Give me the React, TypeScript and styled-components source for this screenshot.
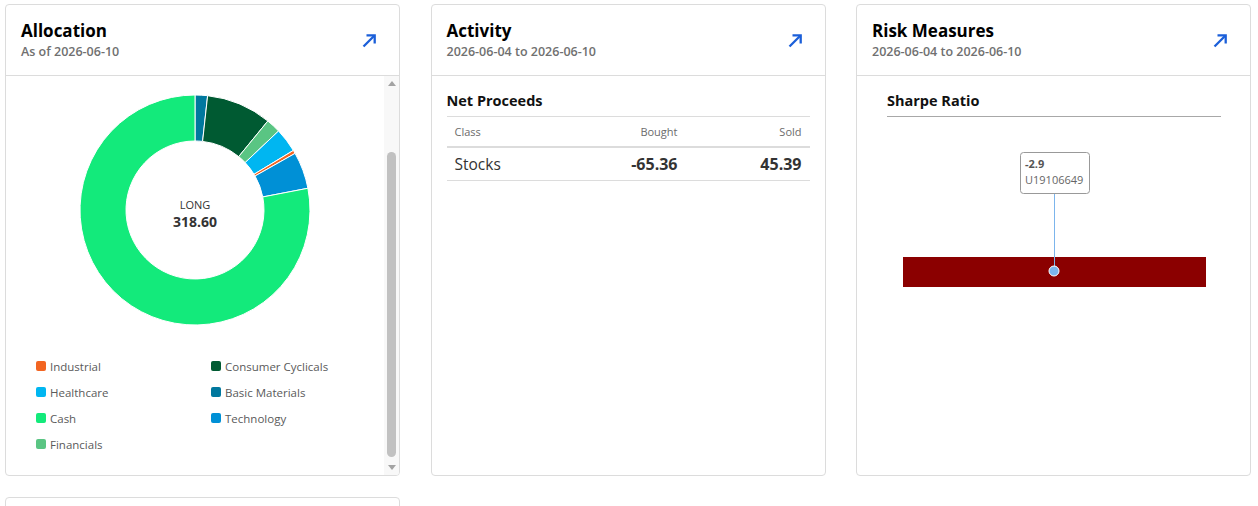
import styled, { createGlobalStyle } from "styled-components";

const GlobalStyle = createGlobalStyle`
  html, body {
    margin: 0;
    padding: 0;
    background: #fff;
    font-family: "Open Sans", "Lato", sans-serif;
    color: #222;
  }
  * { box-sizing: border-box; }
`;

type Slice = { name: string; color: string; value: number };

const slices: Slice[] = [
    { name: "Basic Materials", color: "#00789e", value: 5.58 },
    { name: "Consumer Cyclicals", color: "#005a32", value: 29.2 },
    { name: "Financials", color: "#5ac583", value: 6.46 },
    { name: "Healthcare", color: "#00b6f1", value: 10.8 },
    { name: "Industrial", color: "#f26522", value: 1.5 },
    { name: "Technology", color: "#0090d6", value: 16.46 },
    { name: "Cash", color: "#13ea7b", value: 248.6 },
];

const legendOrder = [
    "Industrial",
    "Consumer Cyclicals",
    "Healthcare",
    "Basic Materials",
    "Cash",
    "Technology",
    "Financials",
];

const CX = 189;
const CY = 120;
const R_OUT = 115;
const R_IN = 69;

const pt = (r: number, deg: number) => {
    const a = (deg * Math.PI) / 180;
    return `${(CX + r * Math.sin(a)).toFixed(2)} ${(CY - r * Math.cos(a)).toFixed(2)}`;
};

const arcPath = (a0: number, a1: number) => {
    const large = a1 - a0 > 180 ? 1 : 0;
    return [
        `M ${pt(R_OUT, a0)}`,
        `A ${R_OUT} ${R_OUT} 0 ${large} 1 ${pt(R_OUT, a1)}`,
        `L ${pt(R_IN, a1)}`,
        `A ${R_IN} ${R_IN} 0 ${large} 0 ${pt(R_IN, a0)}`,
        "Z",
    ].join(" ");
};

const Donut = () => {
    const total = slices.reduce((s, x) => s + x.value, 0);
    let angle = 0;
    return (
        <DonutSvg width={378} height={240} viewBox="0 0 378 240">
            {slices.map((s) => {
                const a0 = angle;
                angle += (s.value / total) * 360;
                return <path key={s.name} d={arcPath(a0, angle)} fill={s.color} stroke="#fff" strokeWidth={1} />;
            })}
            <text x={CX} y={CY - 1} textAnchor="middle" fontSize="11" fill="#333">
                LONG
            </text>
            <text x={CX} y={CY + 17} textAnchor="middle" fontSize="14" fontWeight="700" fill="#333">
                {total.toFixed(2)}
            </text>
        </DonutSvg>
    );
};

const ExpandIcon = () => (
    <svg width={16} height={16} viewBox="0 0 16 16" fill="none" stroke="currentColor" strokeWidth={2.3}>
        <path d="M2.5 14.5 L13.5 3.5" />
        <path d="M5.5 3.3 H13.7 V11.5" />
    </svg>
);

const Header = ({ title, sub }: { title: string; sub: string }) => (
    <CardHeader>
        <div>
            <Title>{title}</Title>
            <Subtitle>{sub}</Subtitle>
        </div>
        <ExpandLink href="#">
            <ExpandIcon />
        </ExpandLink>
    </CardHeader>
);

const AllocationCard = () => (
    <Card>
        <Header title="Allocation" sub="As of 2026-06-10" />
        <ScrollBody>
            <ScrollContent>
                <Donut />
                <Legend>
                    {legendOrder.map((name) => {
                        const s = slices.find((x) => x.name === name)!;
                        return (
                            <LegendItem key={name}>
                                <Swatch $color={s.color} />
                                {name}
                            </LegendItem>
                        );
                    })}
                </Legend>
            </ScrollContent>
            <ScrollTrack>
                <ScrollArrow $dir="up" />
                <ThumbArea>
                    <Thumb />
                </ThumbArea>
                <ScrollArrow $dir="down" />
            </ScrollTrack>
        </ScrollBody>
    </Card>
);

const ActivityCard = () => (
    <Card>
        <Header title="Activity" sub="2026-06-04 to 2026-06-10" />
        <Section>
            <SectionTitle>Net Proceeds</SectionTitle>
            <Table>
                <thead>
                    <tr>
                        <Th>Class</Th>
                        <Th $right>Bought</Th>
                        <Th $right $width={124}>Sold</Th>
                    </tr>
                </thead>
                <tbody>
                    <tr>
                        <Td>Stocks</Td>
                        <Td $right $bold>-65.36</Td>
                        <Td $right $bold>45.39</Td>
                    </tr>
                </tbody>
            </Table>
        </Section>
    </Card>
);

const RiskCard = () => (
    <Card>
        <Header title="Risk Measures" sub="2026-06-04 to 2026-06-10" />
        <RiskSection>
            <RiskTitle>Sharpe Ratio</RiskTitle>
            <svg width={334} height={300} viewBox="0 0 334 300">
                <rect x={16} y={140} width={303} height={30} fill="#8b0000" />
                <line x1={167.5} y1={76} x2={167.5} y2={154} stroke="#7cb5ec" strokeWidth={1} />
                <circle cx={167} cy={154} r={5} fill="#7cb5ec" stroke="#fff" strokeWidth={1} />
                <rect x={133.5} y={35.5} width={69} height={41} rx={3} fill="#fff" stroke="#999" />
                <text x={138} y={51} fontSize="11" fontWeight="700" fill="#555">
                    -2.9
                </text>
                <text x={138} y={67} fontSize="11" fill="#666">
                    U19106649
                </text>
            </svg>
        </RiskSection>
    </Card>
);

export default function App() {
    return (
        <>
            <GlobalStyle />
            <Page>
                <Grid>
                    <AllocationCard />
                    <ActivityCard />
                    <RiskCard />
                    <Card $short />
                </Grid>
            </Page>
        </>
    );
}

const Page = styled.div`
    padding: 4px 8px 0 5px;
`;

const Grid = styled.div`
    display: grid;
    grid-template-columns: repeat(3, 395px);
    column-gap: 30.5px;
    row-gap: 21px;
`;

const Card = styled.div<{ $short?: boolean }>`
    height: ${(p) => (p.$short ? "120px" : "472px")};
    border: 1px solid #dcdcdc;
    border-radius: 4px;
    background: #fff;
    display: flex;
    flex-direction: column;
    overflow: hidden;
`;

const CardHeader = styled.div`
    height: 71px;
    flex-shrink: 0;
    display: flex;
    justify-content: space-between;
    align-items: flex-start;
    padding: 14px 22px 0 15px;
    border-bottom: 1px solid #dcdcdc;
`;

const Title = styled.div`
    font-size: 17px;
    font-weight: 700;
    color: #000;
    line-height: 23px;
`;

const Subtitle = styled.div`
    font-size: 12.5px;
    font-weight: 600;
    color: #707070;
    line-height: 17px;
    margin-top: 1px;
`;

const ExpandLink = styled.a`
    color: #1b5fd9;
    display: flex;
    margin-top: 13px;
`;

const ScrollBody = styled.div`
    flex: 1;
    display: flex;
    min-height: 0;
`;

const ScrollContent = styled.div`
    flex: 1;
    padding-top: 14px;
`;

const ScrollTrack = styled.div`
    width: 15px;
    background: #f8f8f8;
    display: flex;
    flex-direction: column;
`;

const ScrollArrow = styled.div<{ $dir: "up" | "down" }>`
    height: 15px;
    display: flex;
    align-items: center;
    justify-content: center;

    &::after {
        content: "";
        border-left: 4.5px solid transparent;
        border-right: 4.5px solid transparent;
        ${(p) =>
            p.$dir === "up" ? "border-bottom: 5px solid #a3a3a3;" : "border-top: 5px solid #a3a3a3;"}
    }
`;

const ThumbArea = styled.div`
    flex: 1;
    padding: 61px 3px 3px;
    display: flex;
`;

const Thumb = styled.div`
    flex: 1;
    background: #c1c1c1;
    border-radius: 5px;
`;

const DonutSvg = styled.svg`
    display: block;
    font-family: "Open Sans", "Lato", sans-serif;
`;

const Legend = styled.div`
    display: grid;
    grid-template-columns: 175px 1fr;
    grid-auto-rows: 26px;
    padding: 23px 0 0 30px;
`;

const LegendItem = styled.div`
    display: flex;
    align-items: center;
    gap: 4px;
    font-size: 11.5px;
    color: #5a5a5a;
`;

const Swatch = styled.span<{ $color: string }>`
    width: 10px;
    height: 10px;
    border-radius: 2px;
    background: ${(p) => p.$color};
`;

const Section = styled.div`
    padding: 15px 15px 0 15px;
`;

const SectionTitle = styled.div`
    font-size: 14.5px;
    font-weight: 700;
    color: #111;
    line-height: 20px;
    padding-bottom: 5px;
    border-bottom: 1px solid #dcdcdc;
`;

const Table = styled.table`
    width: 100%;
    border-collapse: collapse;

    thead tr {
        border-bottom: 2px solid #dcdcdc;
    }
    tbody tr {
        border-bottom: 1px solid #dcdcdc;
    }
`;

const Th = styled.th<{ $right?: boolean; $width?: number }>`
    text-align: ${(p) => (p.$right ? "right" : "left")};
    width: ${(p) => (p.$width ? `${p.$width}px` : "auto")};
    font-size: 11px;
    font-weight: 400;
    color: #6b6b6b;
    height: 30px;
    padding: 0 8px;
`;

const Td = styled.td<{ $right?: boolean; $bold?: boolean }>`
    text-align: ${(p) => (p.$right ? "right" : "left")};
    font-size: ${(p) => (p.$bold ? "16px" : "15.5px")};
    font-weight: ${(p) => (p.$bold ? 700 : 400)};
    color: #333;
    height: 33px;
    padding: 0 8px;
`;

const RiskSection = styled.div`
    padding: 15px 29px 0 30px;

    svg {
        display: block;
        font-family: "Open Sans", "Lato", sans-serif;
    }
`;

const RiskTitle = styled(SectionTitle)`
    border-bottom-color: #a8a8a8;
`;
